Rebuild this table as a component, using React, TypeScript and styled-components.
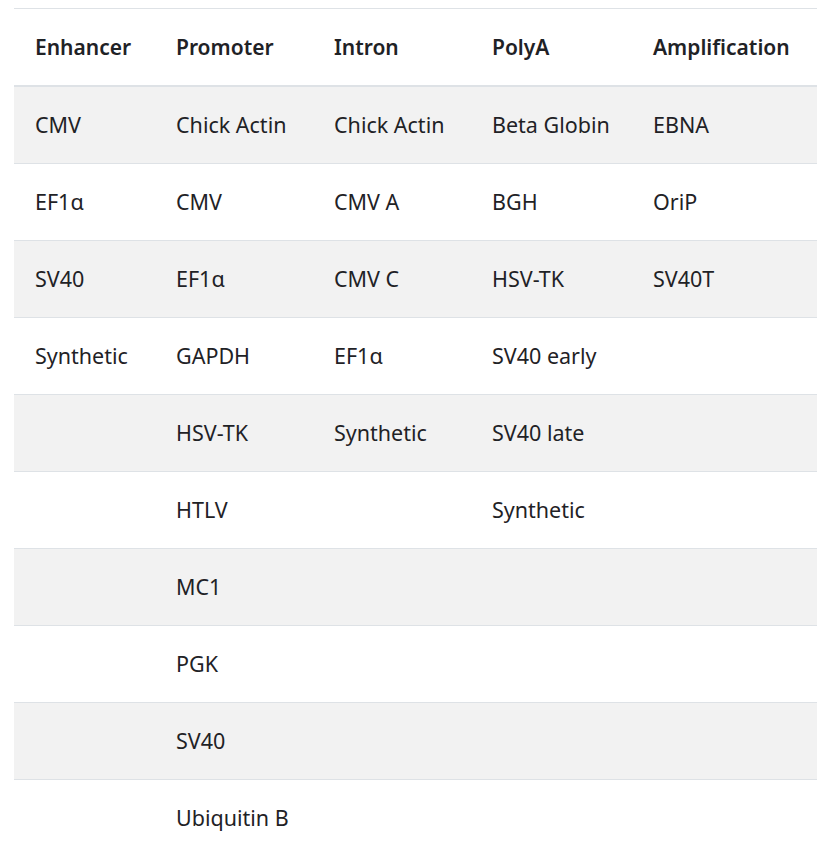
import React from "react";
import styled, { createGlobalStyle } from "styled-components";

const Global = createGlobalStyle`
  html, body { margin: 0; padding: 0; background: #ffffff; }
  body { font-family: "Noto Sans", "Open Sans", sans-serif; color: #1f2226; }
`;

const Wrapper = styled.div`
  padding: 8px 13px 0 14px;
`;

const Table = styled.table`
  width: 803px;
  border-collapse: collapse;
  table-layout: fixed;
  font-size: 21.5px;
  line-height: 30px;
`;

const HeadCell = styled.th<{ $w: number }>`
  box-sizing: border-box;
  width: ${(p) => p.$w}px;
  text-align: left;
  font-weight: 600;
  font-size: 21px;
  padding: 23px 21px;
  border-top: 1px solid #dee2e6;
  border-bottom: 2px solid #dee2e6;
  white-space: nowrap;
`;

const Row = styled.tr<{ $striped: boolean }>`
  background: ${(p) => (p.$striped ? "#f2f2f2" : "#ffffff")};
`;

const Cell = styled.td`
  box-sizing: border-box;
  padding: 23px 21px;
  border-top: 1px solid #dee2e6;
  white-space: nowrap;
  font-weight: 400;
`;

const columns = [
  { title: "Enhancer", w: 141 },
  { title: "Promoter", w: 158 },
  { title: "Intron", w: 158 },
  { title: "PolyA", w: 161 },
  { title: "Amplification", w: 185 },
];

const rows: string[][] = [
  ["CMV", "Chick Actin", "Chick Actin", "Beta Globin", "EBNA"],
  ["EF1α", "CMV", "CMV A", "BGH", "OriP"],
  ["SV40", "EF1α", "CMV C", "HSV-TK", "SV40T"],
  ["Synthetic", "GAPDH", "EF1α", "SV40 early", ""],
  ["", "HSV-TK", "Synthetic", "SV40 late", ""],
  ["", "HTLV", "", "Synthetic", ""],
  ["", "MC1", "", "", ""],
  ["", "PGK", "", "", ""],
  ["", "SV40", "", "", ""],
  ["", "Ubiquitin B", "", "", ""],
];

export default function App() {
  return (
    <>
      <Global />
      <Wrapper>
        <Table>
          <thead>
            <tr>
              {columns.map((c) => (
                <HeadCell key={c.title} $w={c.w}>
                  {c.title}
                </HeadCell>
              ))}
            </tr>
          </thead>
          <tbody>
            {rows.map((r, i) => (
              <Row key={i} $striped={i % 2 === 0}>
                {r.map((v, j) => (
                  <Cell key={j}>{v}</Cell>
                ))}
              </Row>
            ))}
          </tbody>
        </Table>
      </Wrapper>
    </>
  );
}
